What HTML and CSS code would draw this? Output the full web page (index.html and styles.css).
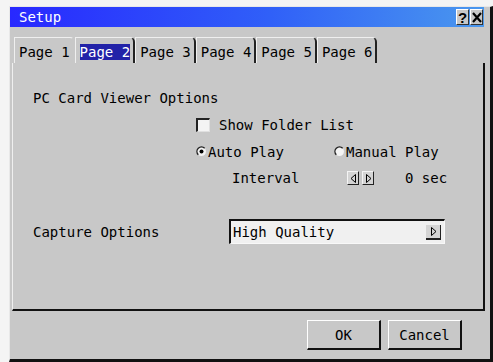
FILE: index.html
```html
<!DOCTYPE html>
<html lang="en">
<head>
    <meta charset="UTF-8">
    <title>Setup</title>
    <link rel="stylesheet" href="styles.css">
</head>
<body>
    <div class="window">
        <div class="titlebar">
            <span class="title">Setup</span>
            <div class="title-btns">
                <span class="tbtn">?</span>
                <span class="tbtn">
                    <svg width="10" height="11" viewBox="0 0 10 11"><path d="M1 1L9 10M9 1L1 10" stroke="#000" stroke-width="2.2"/></svg>
                </span>
            </div>
        </div>

        <div class="tabs">
            <div class="tab">Page 1</div>
            <div class="tab active"><span>Page 2</span></div>
            <div class="tab">Page 3</div>
            <div class="tab">Page 4</div>
            <div class="tab">Page 5</div>
            <div class="tab">Page 6</div>
        </div>

        <div class="panel">
            <div class="row">PC Card Viewer Options</div>

            <div class="row opt">
                <span class="check"></span>
                <span>Show Folder List</span>
            </div>

            <div class="row opt">
                <div class="radio-item">
                    <svg class="radio" width="11" height="11" viewBox="0 0 11 11">
                        <circle cx="5.5" cy="5.5" r="4.5" fill="#f4f4f4"/>
                        <path d="M2.3 8.7A4.5 4.5 0 0 1 8.7 2.3" fill="none" stroke="#222" stroke-width="1.4"/>
                        <circle cx="5.5" cy="5.5" r="2" fill="#000"/>
                    </svg>
                    <span>Auto Play</span>
                </div>
                <div class="radio-item">
                    <svg class="radio" width="11" height="11" viewBox="0 0 11 11">
                        <circle cx="5.5" cy="5.5" r="4.5" fill="#f4f4f4"/>
                        <path d="M2.3 8.7A4.5 4.5 0 0 1 8.7 2.3" fill="none" stroke="#222" stroke-width="1.4"/>
                    </svg>
                    <span>Manual Play</span>
                </div>
            </div>

            <div class="row interval">
                <span class="interval-label">Interval</span>
                <span class="arrow-btn">
                    <svg width="7" height="9" viewBox="0 0 7 9"><path d="M5.5 0.5L1 4.5L5.5 8.5Z" fill="none" stroke="#000"/></svg>
                </span>
                <span class="arrow-btn">
                    <svg width="7" height="9" viewBox="0 0 7 9"><path d="M1.5 0.5L6 4.5L1.5 8.5Z" fill="none" stroke="#000"/></svg>
                </span>
                <span class="value">0 sec</span>
            </div>

            <div class="row capture">
                <span class="capture-label">Capture Options</span>
                <div class="select">
                    <span>High Quality</span>
                    <span class="select-btn">
                        <svg width="7" height="9" viewBox="0 0 7 9"><path d="M1.5 0.5L6 4.5L1.5 8.5Z" fill="none" stroke="#000"/></svg>
                    </span>
                </div>
            </div>
        </div>

        <div class="footer">
            <button>OK</button>
            <button>Cancel</button>
        </div>
    </div>
</body>
</html>
```

FILE: styles.css
```css
* {
    margin: 0;
    padding: 0;
    box-sizing: border-box;
}

body {
    font-family: "DejaVu Sans Mono", "Liberation Mono", monospace;
    font-size: 14px;
    color: #000;
    background-color: #f4f4f4;
    width: 493px;
    height: 362px;
    overflow: hidden;
    padding: 6px 0 0 9px;
}

.window {
    width: 484px;
    height: 356px;
    background-color: #c8c8c8;
    border-top: 1px solid #e8e8e8;
    border-left: 1px solid #e8e8e8;
    border-right: 3px solid #111;
    border-bottom: 3px solid #111;
    display: flex;
    flex-direction: column;
}

.titlebar {
    height: 20px;
    margin-right: 6px;
    background: linear-gradient(90deg, #2828ff 0%, #3060f8 55%, #4a98ee 100%);
    color: #fff;
    display: flex;
    align-items: center;
    justify-content: space-between;
    padding-left: 9px;
}

.title-btns {
    display: flex;
    gap: 1px;
    padding-right: 1px;
}

.tbtn {
    width: 13px;
    height: 16px;
    background-color: #c8c8c8;
    border-top: 1px solid #fff;
    border-left: 1px solid #fff;
    border-right: 1px solid #333;
    border-bottom: 1px solid #333;
    display: flex;
    align-items: center;
    justify-content: center;
    font-family: "Liberation Sans", sans-serif;
    font-weight: bold;
    font-size: 15px;
    color: #000;
    line-height: 1;
}

.tabs {
    display: flex;
    height: 26px;
    margin-top: 10px;
    padding-left: 4px;
}

.tab {
    height: 26px;
    display: flex;
    align-items: center;
    padding: 2px 3px 0 4px;
    border-top: 1px solid #efefef;
    border-left: 1px solid #efefef;
    border-right: 2px solid #222;
    border-top-right-radius: 5px;
}

.tab:first-child {
    border-right-color: #c8c8c8;
}

.tab.active span {
    background-color: #2222a8;
    color: #fff;
}

.panel {
    height: 248px;
    margin-left: 2px;
    margin-right: 5px;
    border-left: 1px solid #efefef;
    border-right: 2px solid #111;
    border-bottom: 2px solid #111;
    padding: 21px 0 0 20px;
}

.row {
    height: 27px;
    display: flex;
    align-items: center;
}

.opt {
    padding-left: 163px;
}

.check {
    width: 14px;
    height: 14px;
    margin-right: 9px;
    background-color: #f4f4f4;
    border-top: 2px solid #222;
    border-left: 2px solid #222;
    border-right: 1px solid #e0e0e0;
    border-bottom: 1px solid #e0e0e0;
}

.radio-item {
    width: 138px;
    display: flex;
    align-items: center;
    gap: 1px;
}

.interval {
    height: 26px;
    padding-left: 199px;
}

.interval-label {
    width: 115px;
}

.arrow-btn {
    width: 12px;
    height: 14px;
    margin-right: 3px;
    background-color: #d4d4d4;
    border-top: 1px solid #f4f4f4;
    border-left: 1px solid #f4f4f4;
    border-right: 1px solid #222;
    border-bottom: 1px solid #222;
    display: flex;
    align-items: center;
    justify-content: center;
}

.value {
    margin-left: 28px;
}

.capture {
    height: 25px;
    margin-top: 28px;
}

.capture-label {
    width: 196px;
}

.select {
    width: 216px;
    height: 25px;
    background-color: #f0f0f0;
    border-top: 2px solid #111;
    border-left: 2px solid #111;
    border-right: 1px solid #f8f8f8;
    border-bottom: 1px solid #f8f8f8;
    display: flex;
    align-items: center;
    justify-content: space-between;
    padding: 0 3px 0 2px;
}

.select-btn {
    width: 15px;
    height: 15px;
    background-color: #d4d4d4;
    border-right: 1px solid #222;
    border-bottom: 2px solid #222;
    display: flex;
    align-items: center;
    justify-content: center;
}

.footer {
    display: flex;
    justify-content: flex-end;
    gap: 7px;
    padding: 9px 28px 0 0;
}

button {
    width: 74px;
    height: 30px;
    background-color: #c8c8c8;
    border-top: 1px solid #fff;
    border-left: 1px solid #fff;
    border-right: 2px solid #111;
    border-bottom: 2px solid #111;
    font-family: inherit;
    font-size: 14px;
    color: #000;
}
```
